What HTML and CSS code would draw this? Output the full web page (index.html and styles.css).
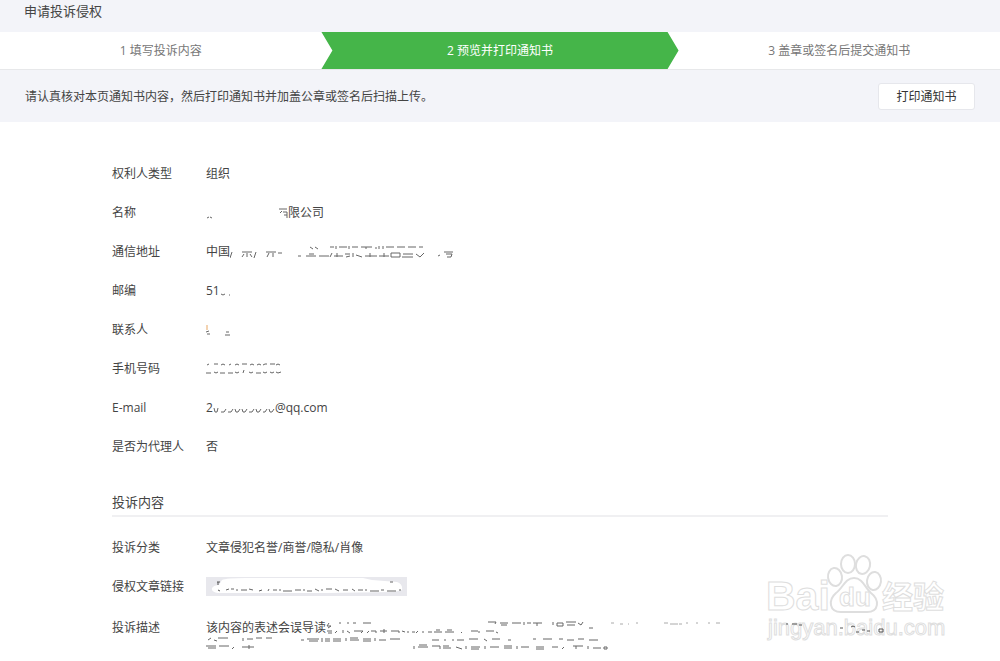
FILE: index.html
```html
<!DOCTYPE html>
<html lang="zh-CN">
<head>
<meta charset="utf-8">
<meta name="viewport" content="width=device-width, initial-scale=1">
<title>申请投诉侵权</title>
<link rel="stylesheet" href="styles.css">
</head>
<body>
<header class="page-head"><h1 class="page-title">申请投诉侵权</h1></header>
<ol class="steps">
  <li class="step">1 填写投诉内容</li>
  <li class="step step-current" aria-current="step">2 预览并打印通知书</li>
  <li class="step">3 盖章或签名后提交通知书</li>
</ol>
<div class="toolbar">
  <p class="hint">请认真核对本页通知书内容，然后打印通知书并加盖公章或签名后扫描上传。</p>
  <button class="print" type="button">打印通知书</button>
</div>
<main class="notice">
  <dl class="fields">
    <div class="row"><dt>权利人类型</dt><dd>组织</dd></div>
    <div class="row"><dt>名称</dt><dd>
      <svg class="marks" width="82" height="18" aria-hidden="true"><path d="M1 14l2-1M4 13l2 1M73 5h8M76 7l-2 2M77 8h4v6M78 11h3"/></svg>限公司</dd></div>
    <div class="row"><dt>通信地址</dt><dd>中国
      <svg class="marks" width="226" height="18" aria-hidden="true"><path d="M2 9l-2 6M12 9h10M14 11l-2 3M17 10v4M20 11l2 3M26 9l-2 6M36 9h10M39 10l-2 4M43 10v4M48 10h4M80 4l3 2M85 4l3 2M100 4h4M106 3v3M109 4h8M119 3v3M122 4h6M131 4h11M136 4v2M145 5h2M149 3v3M153 3v3M156 4h8M167 4h8M178 4h8M189 4h4M68 13h3M76 13h10M79 11h5M89 13h10M102 10l-2 4M104 13h9M107 10v4M115 11h5M116 14l4-1M123 10v4M126 12l6 2M135 13h12M140 10v4M149 13h10M154 10v4M161 10h9v4h-9zM173 11h10M172 14h11M186 11l4 3M194 10l-4 4M208 13l2-1M214 9h9M216 11h6l-1 3h-4"/></svg></dd></div>
    <div class="row"><dt>邮编</dt><dd>51
      <svg class="marks" width="18" height="18" aria-hidden="true"><path d="M1 12l2 1l2-1M9 13h1"/></svg></dd></div>
    <div class="row"><dt>联系人</dt><dd>
      <svg class="marks" width="30" height="18" aria-hidden="true"><path class="warm" d="M1 4v5"/><path d="M0 11l3-1M1 13h3M20 11h3M19 14h5"/></svg></dd></div>
    <div class="row"><dt>手机号码</dt><dd>
      <svg class="marks" width="78" height="18" aria-hidden="true"><path d="M1 5l2-1M8 4h4M15 5l2-1l2 1M23 5l2-1M29 5l2-1l2 1M36 4h5M44 5l2-1l2 1M51 5l2-1l2 1M57 5l2-1h2M64 4h5M70 5l2-1l2 1M0 13h5M8 12l2 1l2-1M14 13h5M22 13h5M29 12l2 1l2-1M38 10l-1 3M43 12l2 1l2-1M50 13h5M57 12l2 1l2-1M64 12l2 1l2-1M70 12l2 1l3-1"/></svg></dd></div>
    <div class="row"><dt>E-mail</dt><dd>2
      <svg class="marks" width="62" height="18" aria-hidden="true"><path d="M1 9l1 4h2l1-4M8 13h3l2-3M15 13h3l2-3M22 10l1 3h2l2-3M29 10l1 3h2l2-3M36 13h3l2-3M43 10l1 3h2l2-3M50 13h2l2-3M56 10l1 3h2l2-3"/></svg>@qq.com</dd></div>
    <div class="row"><dt>是否为代理人</dt><dd>否</dd></div>
  </dl>
  <h2 class="section-title">投诉内容</h2>
  <dl class="fields">
    <div class="row"><dt>投诉分类</dt><dd>文章侵犯名誉/商誉/隐私/肖像</dd></div>
    <div class="row"><dt>侵权文章链接</dt><dd>
      <svg class="link-box" width="201" height="19" role="img" aria-label="文章链接">
        <rect width="201" height="19" fill="#e8e8ed"/>
        <path d="M13 8L16 3Q20 1 40 1H157L166 3L191 5Q197 7 196 13L188 15L120 16L12 16Q5 15 6 11Q8 8 13 8Z" fill="#fff"/>
        <path class="bold" d="M11 5h3M12 5v3M12 13l2 1M53 14l3-1"/>
        <path class="scratch" d="M20 13l3-1M25 12h3M30 13h2M35 13h6M43 12l4 1M63 12l-1 2M67 13h4M74 12v2M77 14h9M89 13h6M98 12v2M101 14h5M109 12l4 2M116 12v2M120 12h6M129 12l4 2M137 13h5M146 12l3 2M152 13h5M160 12v2M164 14h9M175 13h3M181 14h9M184 5h3M194 12v2"/>
      </svg></dd></div>
    <div class="row description"><dt>投诉描述</dt><dd>该内容的表述会误导读
      <svg class="marks" width="410" height="18" aria-hidden="true"><path d="M3 4l-2 3h4l-3 2M1 12h5M2 14h4M13 4h2M22 3v2M27 4h3M37 4h8M11 12l-2 2M17 11v3M21 12l3 2M28 12h9l-2 2M43 12l-2 2M45 12h5v2M54 12h7M58 10v4M65 12h8v2M76 12l3 1M82 12v2M86 13h3M92 12l-2 2M97 12v2M102 13h4M108 13h8M110 11h4M119 13h9M121 11h5M136 13l-1 1M145 12h7M153 12v2M160 12h8M170 13l2 1M162 3h8l-1 2M174 4h8M175 6h6M186 4h9M198 3v3M201 4h4M207 4h9M211 4v3M227 3v3M231 4h6v3h-6zM240 3h10M241 6h8M252 4l3 2M257 3l-2 3M263 9h4"/><path class="faint" d="M285 4h3M294 5h3M302 5h1M310 4h2M338 4h4M344 5h8M353 5h3M360 4h2M370 4h2M382 4h2M390 4h4"/></svg>
      <svg class="marks remainder" width="682" height="18" aria-hidden="true"><path d="M5 1l-3 2M12 1h10M37 1v3M41 2h6M50 1h6M60 1h6M8 3l3 1M95 3h3M101 2h12M103 4h9M116 1v4M119 2h5M119 4h5M127 2h8M127 4h8M140 1v3M144 3h9M144 1h8M157 2h8M157 4h8M169 1v3M173 3h7M184 2h10M226 3h7M238 3h2M247 2v2M251 3h7M263 2h9M278 2l3 2M286 2h8M302 3h3M327 2h3M337 2h9M353 2h4M361 3h7M372 2h6M383 3h9M0 9h10M2 11h8M13 9h10M28 10l-2 2M36 10h12M43 8v4M208 9v3M212 10h10M213 8h8M226 9h8v3M237 11h8M237 9h6M250 10l6 2M260 9v3M265 10h9M265 12h8M279 9v3M284 10h9M298 11h8M298 9h8M311 9v3M315 10h8M330 10h8M330 12h8M346 10h6M358 10l-2 2M367 9h10M370 9v3M382 9v3M387 11h8M398 10h3v2h-3z"/></svg></dd></div>
  </dl>
  <svg class="watermark" width="182" height="92" viewBox="766 550 182 92" role="img" aria-label="Baidu 经验 jingyan.baidu.com">
    <g class="outline">
      <text class="brand" x="766" y="609">Bai</text>
      <ellipse cx="835" cy="576" rx="7" ry="9" transform="rotate(-8 835 576)"/>
      <ellipse cx="848" cy="563" rx="7" ry="9"/>
      <ellipse cx="863" cy="564" rx="7" ry="9" transform="rotate(12 863 564)"/>
      <ellipse cx="874" cy="580" rx="7" ry="9" transform="rotate(8 874 580)"/>
      <path d="M854 577C863 577 865 587 871 592C880 599 879 611 867 611H841C829 611 828 599 836 592C843 587 845 577 854 577Z"/>
      <text class="du" x="839" y="605">du</text>
      <text class="jingyan" x="882" y="607">经验</text>
      <text class="domain" x="768" y="634">jingyan.baidu.com</text>
    </g>
    <path class="bold" d="M786 623h2M792 623h5M799 624h3M840 627h3M851 626l2-1l2 1M856 631h3M862 629h3M867 630h3M879 628h4v3h-4z"/>
  </svg>
</main>
</body>
</html>
```
FILE: styles.css
```css
* { box-sizing: border-box; }
body {
  margin: 0;
  background: #fff;
  color: #444;
  font: 12px/18px "Open Sans", "Noto Sans CJK SC", sans-serif;
}
h1, h2, p, dl, dd, ol { margin: 0; padding: 0; }
.page-head { height: 32px; padding: 2px 24px; background: #f3f4f9; }
.page-title { font-size: 13px; font-weight: 400; line-height: 18px; }
.steps {
  display: flex;
  height: 38px;
  list-style: none;
  border-bottom: 1px solid #e7e8ea;
}
.step { flex: 9; display: flex; align-items: center; justify-content: center; color: #777; }
.step-current {
  flex: 10;
  color: #fff;
  background: #45b549;
  clip-path: polygon(0 0, calc(100% - 11px) 0, 100% 50%, calc(100% - 11px) 100%, 0 100%, 11px 50%);
}
.toolbar {
  display: flex;
  align-items: center;
  justify-content: space-between;
  padding: 13px 25px 12px;
  background: #f3f4f9;
}
.print {
  width: 97px;
  height: 27px;
  padding: 0;
  border: 1px solid #e6e7ec;
  border-radius: 3px;
  background: #fff;
  color: #333;
  font: inherit;
}
.notice { position: relative; padding: 32px 112px 0; }
.row { display: flex; align-items: center; height: 39px; }
.row dt { flex: 0 0 94px; }
.row dd { flex: 1; display: flex; align-items: center; min-width: 0; }
.section-title {
  margin: 24px 0 11px;
  padding: 3px 0 4px;
  border-bottom: 2px solid #f0f0f2;
  font-size: 13px;
  font-weight: 400;
  line-height: 18px;
}
.description { align-items: flex-start; height: auto; padding-top: 13px; }
.description dd { flex-wrap: wrap; }
.remainder { flex: 0 0 100%; }
.marks, .scratch { fill: none; stroke: #666; stroke-width: 1; }
.bold { fill: none; stroke: #555; stroke-width: 1; }
.faint { stroke: #aaa; }
.warm { stroke: #e8a765; }
.link-box { display: block; }
.watermark { position: absolute; right: 52px; bottom: 12px; }
.outline { fill: #fff; stroke: #dedede; stroke-width: 1; }
.outline ellipse, .outline path { stroke-width: 2; }
.brand { font: bold 41px "Liberation Sans", sans-serif; }
.du { font: bold 26px "Liberation Sans", sans-serif; }
.jingyan { font: bold 31px "Noto Sans CJK SC", sans-serif; }
.domain { font: 22px "Liberation Sans", sans-serif; }
```
